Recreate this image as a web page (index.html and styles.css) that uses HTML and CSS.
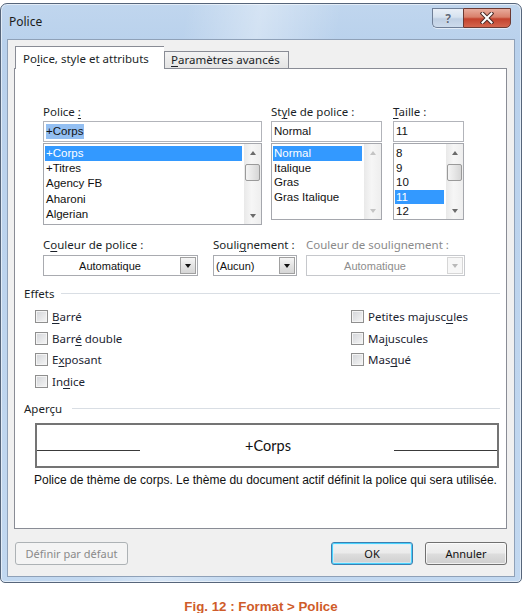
FILE: index.html
```html
<!DOCTYPE html>
<html lang="fr">
<head>
<meta charset="utf-8">
<title>Police</title>
<link rel="stylesheet" href="styles.css">
</head>
<body>
<div class="window">
  <div class="titlebar">
    <span class="title">Police</span>
    <div class="caption-buttons">
      <span class="cbtn help">?</span>
      <span class="cbtn close">
        <svg width="14" height="12" viewBox="0 0 14 12">
          <path d="M2.5 1.5 L11.5 10.5 M11.5 1.5 L2.5 10.5" stroke="#4a2a26" stroke-width="4" stroke-linecap="square"/>
          <path d="M2.5 1.5 L11.5 10.5 M11.5 1.5 L2.5 10.5" stroke="#ffffff" stroke-width="2" stroke-linecap="square"/>
        </svg>
      </span>
    </div>
  </div>

  <div class="client">
    <div class="tabs">
      <div class="tab active">Po<u>l</u>ice, style et attributs</div>
      <div class="tab"><u>P</u>aramètres avancés</div>
    </div>

    <div class="panel">
      <div class="fontrow">
        <div class="col col-font">
          <div class="label">Police <u>:</u></div>
          <div class="input"><span class="sel-text">+Corps</span></div>
          <div class="listbox list-font">
            <ul class="items">
              <li class="selected">+Corps</li>
              <li>+Titres</li>
              <li>Agency FB</li>
              <li>Aharoni</li>
              <li>Algerian</li>
            </ul>
            <div class="scrollbar">
              <span class="sb-btn"><i class="tri up"></i></span>
              <span class="sb-thumb"></span>
              <span class="sb-track"></span>
              <span class="sb-btn"><i class="tri down"></i></span>
            </div>
          </div>
        </div>

        <div class="col col-style">
          <div class="label">St<u>y</u>le de police :</div>
          <div class="input">Normal</div>
          <div class="listbox list-small">
            <ul class="items">
              <li class="selected">Normal</li>
              <li>Italique</li>
              <li>Gras</li>
              <li>Gras Italique</li>
            </ul>
            <div class="scrollbar off">
              <span class="sb-btn"><i class="tri up"></i></span>
              <span class="sb-track"></span>
              <span class="sb-btn"><i class="tri down"></i></span>
            </div>
          </div>
        </div>

        <div class="col col-size">
          <div class="label"><u>T</u>aille :</div>
          <div class="input">11</div>
          <div class="listbox list-small">
            <ul class="items">
              <li>8</li>
              <li>9</li>
              <li>10</li>
              <li class="selected">11</li>
              <li>12</li>
            </ul>
            <div class="scrollbar">
              <span class="sb-btn"><i class="tri up"></i></span>
              <span class="sb-thumb"></span>
              <span class="sb-track"></span>
              <span class="sb-btn"><i class="tri down"></i></span>
            </div>
          </div>
        </div>
      </div>

      <div class="comborow">
        <div class="col col-color">
          <div class="label">C<u>o</u>uleur de police :</div>
          <div class="combo centered">
            <span class="combo-text">Automatique</span>
            <span class="combo-btn"><i class="tri down dark"></i></span>
          </div>
        </div>
        <div class="col col-under">
          <div class="label">Souli<u>g</u>nement :</div>
          <div class="combo">
            <span class="combo-text">(Aucun)</span>
            <span class="combo-btn"><i class="tri down dark"></i></span>
          </div>
        </div>
        <div class="col col-ucolor">
          <div class="label disabled">Couleur de soulignement :</div>
          <div class="combo centered disabled">
            <span class="combo-text">Automatique</span>
            <span class="combo-btn"><i class="tri down"></i></span>
          </div>
        </div>
      </div>

      <div class="group-title group-effects"><span>Effets</span><span class="rule"></span></div>
      <div class="effects">
        <label class="check"><span class="box"></span><span><u>B</u>arré</span></label>
        <label class="check"><span class="box"></span><span>Petites majusc<u>u</u>les</span></label>
        <label class="check"><span class="box"></span><span>Barr<u>é</u> double</span></label>
        <label class="check"><span class="box"></span><span>Ma<u>j</u>uscules</span></label>
        <label class="check"><span class="box"></span><span>E<u>x</u>posant</span></label>
        <label class="check"><span class="box"></span><span>Mas<u>q</u>ué</span></label>
        <label class="check"><span class="box"></span><span>In<u>d</u>ice</span></label>
      </div>

      <div class="group-title group-preview"><span>Aperçu</span><span class="rule"></span></div>
      <div class="preview">
        <span class="pv-line"></span>
        <span class="pv-text">+Corps</span>
        <span class="pv-line"></span>
      </div>
      <p class="description">Police de thème de corps. Le thème du document actif définit la police qui sera utilisée.</p>
    </div>

    <div class="buttons">
      <span class="btn disabled wide">Définir par défaut</span>
      <span class="spacer"></span>
      <span class="btn default">OK</span>
      <span class="btn">Annuler</span>
    </div>
  </div>
</div>

<p class="caption">Fig. 12 : Format &gt; Police</p>
</body>
</html>
```

FILE: styles.css
```css
* { box-sizing: border-box; }

body {
  margin: 0;
  padding-top: 3px;
  background: #ffffff;
  font-family: "Noto Sans", "DejaVu Sans", sans-serif;
  font-size: 11.5px;
  color: #1b1f27;
}

u { text-decoration-thickness: 1px; text-underline-offset: 2px; }

/* ---------- window frame ---------- */
.window {
  width: 522px;
  height: 580px;
  border: 1px solid #56657a;
  border-radius: 7px 7px 5px 5px;
  background:
    linear-gradient(100deg, rgba(255,255,255,0) 30%, rgba(255,255,255,0.35) 42%, rgba(255,255,255,0) 55%),
    linear-gradient(to bottom, #c0d6ee 0%, #b9d1ec 40px, #c2d8f0 100%);
  box-shadow: inset 0 0 0 1px rgba(255,255,255,0.55);
  padding: 0 6px 5px 6px;
  display: flex;
  flex-direction: column;
}

.titlebar {
  height: 35px;
  display: flex;
  align-items: flex-start;
  justify-content: space-between;
}

.title {
  font-size: 12px;
  color: #1c1c1c;
  margin: 9px 0 0 2px;
}

.caption-buttons {
  display: flex;
  margin-top: 4px;
  margin-right: 4px;
  box-shadow: 0 1px 0 rgba(255,255,255,0.6);
  border-radius: 0 0 5px 5px;
}

.cbtn {
  height: 20px;
  display: flex;
  align-items: center;
  justify-content: center;
  border: 1px solid #6f7f97;
}

.help {
  width: 31px;
  border-right: none;
  border-radius: 0 0 0 5px;
  background: linear-gradient(to bottom, #e9eff7 0%, #d6e2ef 45%, #bfcfe3 55%, #cddbec 100%);
  color: #5d6878;
  font-size: 12px;
  font-weight: bold;
  text-shadow: 0 0 1px #ffffff;
}

.close {
  width: 48px;
  border-color: #6c3a33;
  border-radius: 0 0 5px 0;
  background: linear-gradient(to bottom, #e8ab9c 0%, #d9806b 45%, #c3422d 55%, #d4664e 100%);
}

.client {
  flex: 1;
  background: #f0f0f0;
  border: 1px solid #8fa1b8;
  padding: 6px 7px 0 6px;
  display: flex;
  flex-direction: column;
}

/* ---------- tabs ---------- */
.tabs {
  height: 22px;
  display: flex;
  align-items: flex-end;
  position: relative;
  z-index: 1;
}

.tab {
  font-size: 11.5px;
  color: #1b1f27;
  border: 1px solid #898c95;
  border-bottom: none;
  background: linear-gradient(to bottom, #f3f3f3, #e4e4e4);
  height: 17px;
  line-height: 15px;
  padding: 0 6px;
  width: 125px;
  white-space: nowrap;
}

.tab.active {
  background: #ffffff;
  height: 23px;
  line-height: 24px;
  margin: 0 0 -1px 1px;
  padding: 0 7px;
  width: 149px;
  border-right: none;
}

/* ---------- tab panel ---------- */
.panel {
  height: 461px;
  background: #ffffff;
  border: 1px solid #898c95;
  padding: 35px 6px 0 0;
}

.label {
  height: 15px;
  line-height: 15px;
  white-space: nowrap;
  color: #1b1f27;
}

.label.disabled { color: #8a8a8a; }

.fontrow {
  display: flex;
  padding-left: 28px;
}

.col { display: flex; flex-direction: column; }
.col-font { width: 219px; margin-right: 9px; }
.col-style { width: 111px; margin-right: 11px; }
.col-size { width: 71px; }

.input {
  margin-top: 2px;
  height: 21px;
  border: 1px solid #b2b4ba;
  background: #ffffff;
  font-family: "Liberation Sans", Arial, sans-serif;
  font-size: 11.5px;
  line-height: 19px;
  padding-left: 2px;
  color: #111;
}

.sel-text {
  background: #93bff2;
  padding: 1px 1px 2px 0;
}

.listbox {
  margin-top: 1px;
  border: 1px solid #a5a7ad;
  display: flex;
  background: #ffffff;
}

.list-font { height: 82px; }
.list-small { height: 77px; }

.items {
  list-style: none;
  margin: 0;
  padding: 2px 2px 0 1px;
  flex: 1;
  font-family: "Liberation Sans", Arial, sans-serif;
  font-size: 11.5px;
  color: #111;
}

.list-font .items li { height: 15.2px; line-height: 15px; padding-left: 1px; }
.list-small .items li { height: 14.5px; line-height: 14px; padding-left: 1px; }

.items li.selected {
  background: #3399ff;
  color: #ffffff;
}

/* ---------- scrollbars ---------- */
.scrollbar {
  width: 17px;
  display: flex;
  flex-direction: column;
  background: linear-gradient(to right, #e9e9e9, #f6f6f6 45%, #eeeeee);
}

.sb-btn {
  height: 17px;
  display: flex;
  align-items: center;
  justify-content: center;
}

.sb-track { flex: 1; }

.sb-thumb {
  height: 17px;
  margin: 3px 1px 0 1px;
  border: 1px solid #9a9a9a;
  border-radius: 2px;
  background: linear-gradient(to right, #f4f4f4, #e6e6e6 50%, #d6d6d6);
}

.tri {
  display: block;
  width: 0;
  height: 0;
  border-left: 3.5px solid transparent;
  border-right: 3.5px solid transparent;
}

.tri.up { border-bottom: 4px solid #6b6b6b; }
.tri.down { border-top: 4px solid #6b6b6b; }
.scrollbar.off .tri.up { border-bottom-color: #c4c4c4; }
.scrollbar.off .tri.down { border-top-color: #c4c4c4; }
.tri.down.dark { border-top-color: #111111; }

/* ---------- combo boxes ---------- */
.comborow {
  display: flex;
  padding-left: 28px;
  margin-top: 12px;
}

.col-color { width: 155px; margin-right: 15px; }
.col-under { width: 84px; margin-right: 9px; }
.col-ucolor { width: 159px; }

.combo {
  margin-top: 3px;
  height: 21px;
  border: 1px solid #a9abb0;
  background: #ffffff;
  display: flex;
  align-items: center;
  padding: 0 1px 0 2px;
}

.combo-text {
  flex: 1;
  font-family: "Liberation Sans", Arial, sans-serif;
  font-size: 11px;
  color: #111;
  white-space: nowrap;
}

.combo.centered .combo-text { text-align: center; padding-right: 6px; }

.combo-btn {
  width: 16px;
  height: 17px;
  border: 1px solid #a0a0a0;
  background: linear-gradient(to bottom, #f6f6f6, #e4e4e4 50%, #d6d6d6);
  display: flex;
  align-items: center;
  justify-content: center;
}

.combo.disabled { border-color: #c6c8cc; }
.combo.disabled .combo-text { color: #8d8d8d; }
.combo.disabled .combo-btn {
  border-color: #d6d6d6;
  background: #f7f7f7;
}
.combo.disabled .tri.down { border-top-color: #b9b9b9; }

/* ---------- group headings ---------- */
.group-title {
  display: flex;
  align-items: center;
  padding-left: 9px;
  height: 15px;
  color: #1b1f27;
}

.group-title .rule {
  flex: 1;
  height: 1px;
  background: #d9dee4;
  margin-left: 7px;
}

.group-effects { margin-top: 10px; }
.group-preview { margin-top: 9px; }
.group-preview .rule { margin-left: 10px; }

/* ---------- effects checkboxes ---------- */
.effects {
  display: grid;
  grid-template-columns: 316px auto;
  grid-auto-rows: 21.6px;
  padding-left: 20px;
  margin-top: 5px;
}

.check {
  display: flex;
  align-items: center;
  white-space: nowrap;
  color: #1b2431;
}

.box {
  width: 13px;
  height: 13px;
  border: 1px solid #8f8f8f;
  background: linear-gradient(135deg, #d2d4d8, #f6f6f6);
  box-shadow: inset 0 0 0 1px #f4f4f4;
  margin-right: 4px;
}

/* ---------- preview ---------- */
.preview {
  margin: 7px 0 0 20px;
  width: 464px;
  height: 45px;
  border: 2px solid #747474;
  display: flex;
  align-items: center;
}

.pv-line {
  width: 103px;
  height: 1px;
  background: #3a3a3a;
  margin-top: 10px;
}

.pv-text {
  flex: 1;
  text-align: center;
  font-family: Lato, "Noto Sans", sans-serif;
  font-size: 14.5px;
  color: #111;
  padding-left: 2px;
}

.description {
  margin: 5px 0 0 19px;
  font-family: "Liberation Sans", Arial, sans-serif;
  font-size: 12px;
  line-height: 15px;
  color: #111;
  white-space: nowrap;
}

/* ---------- dialog buttons ---------- */
.buttons {
  display: flex;
  margin-top: 13px;
  padding-left: 1px;
}

.spacer { flex: 1; }

.btn {
  width: 82px;
  height: 23px;
  border: 1px solid #707070;
  border-radius: 3px;
  background: linear-gradient(to bottom, #f2f2f2 0%, #ebebeb 48%, #dddddd 52%, #cfcfcf 100%);
  box-shadow: inset 0 0 0 1px rgba(255,255,255,0.7);
  display: flex;
  align-items: center;
  justify-content: center;
  font-size: 11px;
  color: #111;
  margin-left: 12px;
}

.btn.wide { width: 113px; margin-left: 0; }

.btn.disabled {
  border-color: #adb2b5;
  background: #f4f4f4;
  color: #8a8a8a;
  box-shadow: none;
}

.btn.default {
  border-color: #3c7fb1;
  box-shadow: inset 0 0 0 1px #48d2fd, inset 0 0 0 2px rgba(210,240,255,0.6);
  margin-left: 0;
}

/* ---------- figure caption ---------- */
.caption {
  margin: 16px 0 0 0;
  width: 522px;
  text-align: center;
  font-family: "Liberation Sans", Arial, sans-serif;
  font-weight: bold;
  font-size: 13.3px;
  color: #cf5c2a;
}
```
